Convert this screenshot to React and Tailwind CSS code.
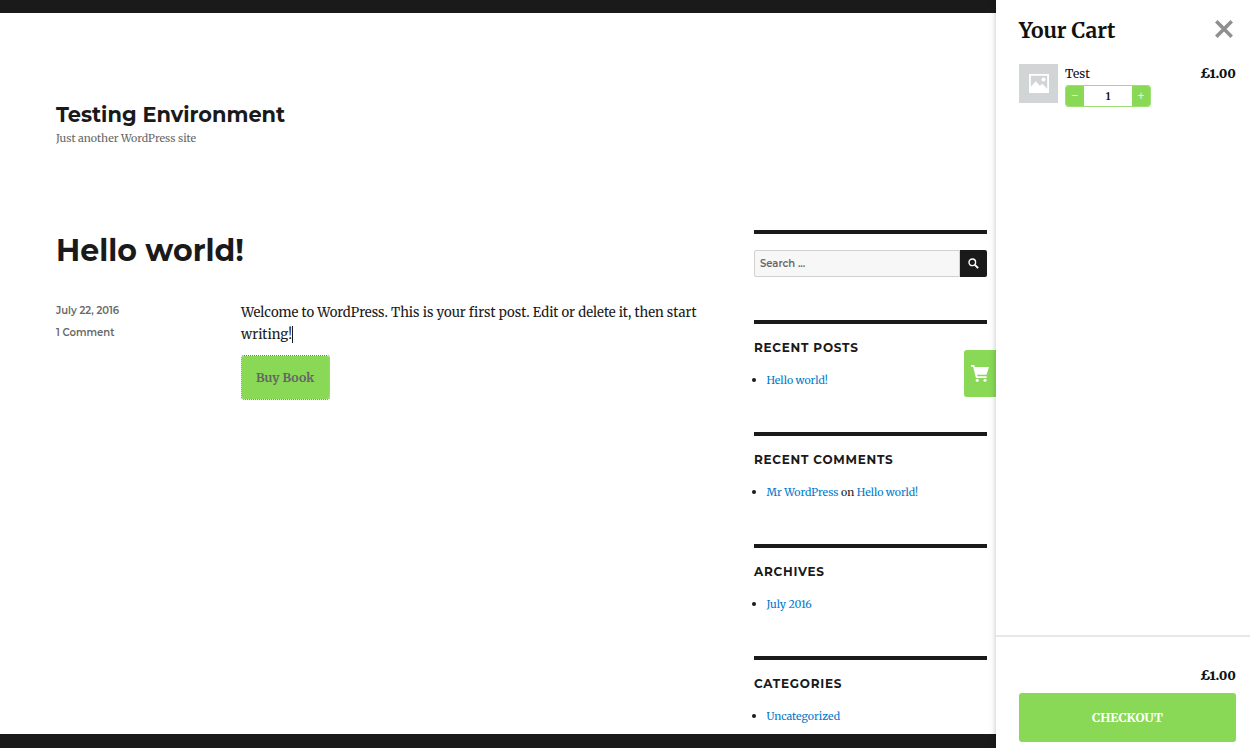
import React from 'react';

const serif = "font-['Merriweather','DejaVu_Serif',serif]";
const sans = "font-['Montserrat','Inter',sans-serif]";

const Widget = ({ title, children }) => (
  <section className="border-t-4 border-[#1a1a1a] h-[112px]">
    <h2 className={`${sans} mt-[16px] h-[16px] text-[12px] leading-[16px] font-bold tracking-[0.75px] text-[#1a1a1a] uppercase`}>{title}</h2>
    <ul className={`${serif} mt-[15px] pl-[12.5px] list-disc marker:text-[13px] text-[10.6px] leading-[18px] text-[#1a1a1a]`}>
      <li>{children}</li>
    </ul>
  </section>
);

const A = ({ children }) => <a className="text-[#007acc]">{children}</a>;

const ImageIcon = () => (
  <svg width="20" height="19" viewBox="0 0 20 19">
    <path fill="#fff" fillRule="evenodd" d="M0 0h20v19H0z M1.8 1.8v11l5-5.5 4 4.5 2.5-2 4.9 5V1.8z" />
    <circle cx="14.5" cy="5.5" r="2" fill="#fff" />
  </svg>
);

const CartIcon = () => (
  <svg width="18" height="17" viewBox="0 0 19 18">
    <path fill="#fff" d="M0 0h3.4l.7 2H19l-2.6 8.4H6.3l.5 1.6H16.6v1.8H5.2L2.2 1.8H0z" />
    <circle cx="6.6" cy="16.2" r="1.6" fill="#fff" />
    <circle cx="14.8" cy="16.2" r="1.6" fill="#fff" />
  </svg>
);

const SearchIcon = () => (
  <svg width="11" height="11" viewBox="0 0 11 11" fill="none" stroke="#fff">
    <circle cx="4.3" cy="4.3" r="3.3" strokeWidth="1.4" />
    <path d="M6.9 6.9l3.2 3.2" strokeWidth="2" />
  </svg>
);

const CloseIcon = () => (
  <svg width="18" height="18" viewBox="0 0 18 18" fill="none" stroke="#8f8f8f" strokeWidth="3.6">
    <path d="M1.3 1.3l15.4 15.4M16.7 1.3L1.3 16.7" />
  </svg>
);

export default function App() {
  return (
    <div className="relative flex h-[748px] w-[1250px] overflow-hidden bg-white">
      <div className="flex w-[996px] flex-col overflow-hidden border-t-[13px] border-b-[14px] border-[#1a1a1a]">
        <header className="h-[217px] shrink-0 pl-[56px] pt-[90px]">
          <h1 className={`${sans} text-[20.9px] leading-[24px] font-bold text-[#1a1a1a]`}>Testing Environment</h1>
          <p className={`${serif} mt-[4px] text-[10.65px] leading-[16px] text-[#686868]`}>Just another WordPress site</p>
        </header>
        <div className="flex pl-[56px] pr-[9px]">
          <main className="w-[698px] shrink-0">
            <h2 className={`${sans} mt-[1px] text-[30px] leading-[40px] font-bold text-[#1a1a1a]`}>Hello world!</h2>
            <div className="mt-[32px] flex">
              <div className={`${sans} w-[185px] shrink-0 text-[10px] font-semibold text-[#686868]`}>
                <p className="leading-[16px]">July 22, 2016</p>
                <p className="mt-[6px] leading-[16px]">1 Comment</p>
              </div>
              <div className="w-[470px]">
                <p className={`${serif} -mt-[1px] text-[13.15px] leading-[22px] text-[#1a1a1a]`}>
                  Welcome to WordPress. This is your first post. Edit or delete it, then start writing!<span className="border-r border-[#1a1a1a]"></span>
                </p>
                <button className={`${serif} mt-[9px] h-[45px] w-[89px] rounded-[3px] border border-dotted border-[#777] bg-[#89d957] bg-clip-padding pt-[1px] pr-[1px] text-[12.3px] font-bold text-[#666]`}>Buy Book</button>
              </div>
            </div>
          </main>
          <aside className="w-[233px] shrink-0">
            <section className="border-t-4 border-[#1a1a1a] h-[90px]">
              <div className="mt-[16px] flex h-[27px]">
                <div className={`${sans} flex flex-1 items-center rounded-l-[2px] border border-[#d1d1d1] bg-[#f7f7f7] px-[5px] text-[10px] font-semibold text-[#686868]`}>Search ...</div>
                <div className="flex w-[27px] items-center justify-center rounded-r-[2px] bg-[#1a1a1a]">
                  <SearchIcon />
                </div>
              </div>
            </section>
            <Widget title="Recent Posts"><A>Hello world!</A></Widget>
            <Widget title="Recent Comments"><A>Mr WordPress</A> on <A>Hello world!</A></Widget>
            <Widget title="Archives"><A>July 2016</A></Widget>
            <Widget title="Categories"><A>Uncategorized</A></Widget>
          </aside>
        </div>
      </div>

      {/* cart tab */}
      <div className="absolute left-[964px] top-[350px] flex h-[47px] w-[32px] items-center justify-center rounded-l-[3px] bg-[#89d957]">
        <CartIcon />
      </div>

      {/* cart panel */}
      <div className="z-10 flex w-[254px] flex-col bg-white shadow-[0_0_6px_rgba(0,0,0,0.25)]">
        <div className="flex h-[64px] items-center justify-between pl-[23px] pr-[17px] pb-[7px]">
          <h2 className={`${serif} mt-[4px] text-[21px] font-bold text-[#111]`}>Your Cart</h2>
          <CloseIcon />
        </div>
        <div className="flex flex-1 pl-[23px] pr-[14px]">
          <div className="flex h-[39px] w-[39px] items-center justify-center bg-[#d1d5d6]"><ImageIcon /></div>
          <div className="ml-[7px] flex-1">
            <p className={`${serif} text-[12px] leading-[20px] text-[#111]`}>Test</p>
            <div className="mt-[1px] flex h-[22px] w-[86px] overflow-hidden rounded-[3px] border border-[#9fe075]">
              <span className="flex w-[18px] items-center justify-center bg-[#89d957] text-[12px] text-white/80">−</span>
              <span className={`${serif} flex flex-1 items-center justify-center text-[10px] font-bold text-[#111]`}>1</span>
              <span className="flex w-[18px] items-center justify-center bg-[#89d957] text-[12px] text-white/80">+</span>
            </div>
          </div>
          <p className={`${serif} oldstyle-nums text-[13px] leading-[20px] font-black text-[#111]`}>£1.00</p>
        </div>
        <div className="h-[113px] border-t-2 border-[#e8e8e8] pl-[23px] pr-[14px]">
          <p className={`${serif} oldstyle-nums mt-[29px] text-right text-[13px] leading-[20px] font-black text-[#111]`}>£1.00</p>
          <button className={`${serif} mt-[7px] h-[49px] w-full rounded-[3px] bg-[#89d957] pt-[2px] text-[12.4px] font-bold text-white`}>CHECKOUT</button>
        </div>
      </div>
    </div>
  );
}
